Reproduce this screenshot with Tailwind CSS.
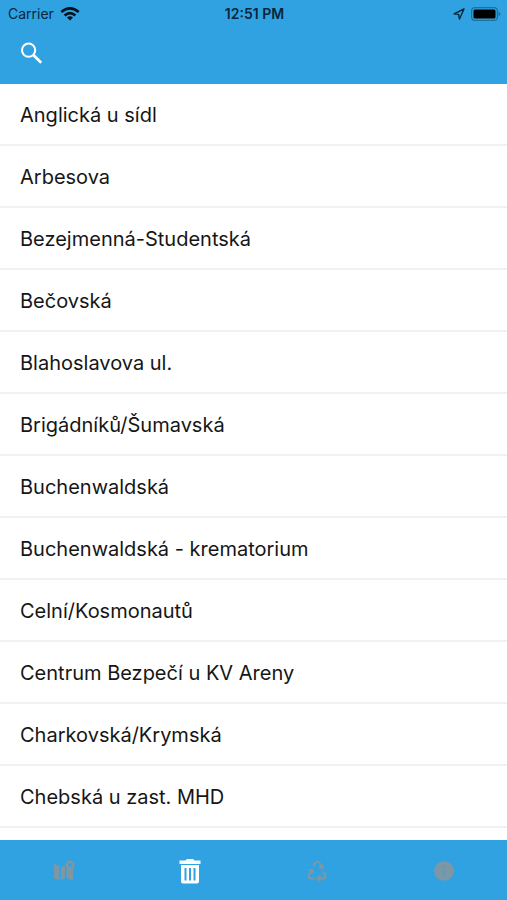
<!DOCTYPE html>
<html lang="cs">
<head>
<meta charset="utf-8">
<meta name="viewport" content="width=device-width, initial-scale=1">
<title>Zastávky</title>
<script src="https://cdn.jsdelivr.net/npm/@tailwindcss/browser@4"></script>
</head>
<body class="flex h-screen flex-col overflow-hidden bg-white font-['Inter','Liberation_Sans',sans-serif] text-[#161616]">
<header class="h-21 shrink-0 bg-[#30a2e1]">
  <div class="grid h-7 grid-cols-3 items-center pr-1.5 pl-2 text-[#07273a]">
    <div class="flex items-center gap-1.5 text-sm">
      <span>Carrier</span>
      <svg class="h-3.5 w-5" viewBox="0 0 20 14" fill="none" stroke="#04121b" stroke-width="2.6" aria-label="Wi-Fi"><path d="M1.3 5.1Q10-2.4 18.7 5.1M4.6 8.4Q10 3.8 15.4 8.4"/><path d="M10 13.5 7 10.5Q10 8 13 10.5Z" fill="#04121b" stroke="none"/></svg>
    </div>
    <time class="text-center text-sm font-semibold">12:51 PM</time>
    <div class="flex items-center justify-end gap-1.5">
      <svg class="size-3" viewBox="0 0 12 12" fill="none" stroke="currentColor" stroke-width="1.4" stroke-linejoin="round" aria-label="Poloha"><path d="M11 1 1 5.8 5.6 6.4 6.5 11Z"/></svg>
      <svg class="h-3.5 w-7.5" viewBox="0 0 30 14" aria-label="Baterie"><rect x=".6" y=".6" width="25.8" height="12.8" rx="3.5" fill="none" stroke="#216f9b" stroke-width="1.2"/><rect x="2.5" y="2.5" width="22" height="9" rx="1.5" fill="#000"/><path d="M27.5 4.7q2 .8 2 2.3t-2 2.3z" fill="#216f9b"/></svg>
    </div>
  </div>
  <button type="button" aria-label="Hledat" class="ml-5 mt-[13px] block">
    <svg class="size-6 text-white" viewBox="0 0 24 24" fill="none" stroke="currentColor"><circle cx="8.6" cy="9.2" r="6.600" stroke-width="2"/><path d="m13.400 14 7.800 7.800" stroke-width="2.7"/></svg>
  </button>
</header>
<main class="min-h-0 flex-1 overflow-hidden">
  <ul class="text-xl *:flex *:h-[62px] *:items-center *:border-b-2 *:border-[#f1f1f1] *:px-5 *:pt-0.5">
    <li>Anglická u sídl</li>
    <li>Arbesova</li>
    <li>Bezejmenná-Studentská</li>
    <li>Bečovská</li>
    <li>Blahoslavova ul.</li>
    <li>Brigádníků/Šumavská</li>
    <li>Buchenwaldská</li>
    <li>Buchenwaldská - krematorium</li>
    <li>Celní/Kosmonautů</li>
    <li>Centrum Bezpečí u KV Areny</li>
    <li>Charkovská/Krymská</li>
    <li>Chebská u zast. MHD</li>
  </ul>
</main>
<nav class="grid h-15 shrink-0 grid-cols-4 bg-[#30a2e1] pt-0.5 text-[#7e97a4]">
  <button type="button" aria-label="Mapa" class="flex items-center justify-center">
    <svg class="size-6" viewBox="0 0 24 24" fill="currentColor"><path d="M3 5 8.500 7v14L3 19.500ZM10 8l4-1.500v12.500l-4 2Z"/><path fill-rule="evenodd" d="M19 1.500a4.500 4.500 0 0 1 4.500 4.500c0 1.800-.9 3.200-1.500 4v11.500l-6.500-2.500V9.500c-.6-1-1-2.200-1-3.500A4.500 4.500 0 0 1 19 1.500Zm0 2.800a1.800 1.800 0 1 0 0 3.600 1.800 1.800 0 0 0 0-3.600Z"/></svg>
  </button>
  <button type="button" aria-label="Odpad" aria-current="page" class="flex items-center justify-center text-white">
    <svg class="h-6.5 w-6" viewBox="0 0 24 26" fill="currentColor"><path d="M1.500 2.500h6L9 1h6l1.500 1.500h6V6h-21Z"/><path fill-rule="evenodd" d="M3 7h18v16.500q0 2-2 2H5q-2 0-2-2ZM6.500 10v12.500h2V10Zm4.500 0v12.500h2V10Zm4.500 0v12.500h2V10Z"/></svg>
  </button>
  <button type="button" aria-label="Recyklace" class="flex items-center justify-center">
    <svg class="size-5" viewBox="0 0 20 20" fill="none" stroke="currentColor" stroke-width="2.200"><path d="M6.300 5 8 2.200q.8-1.200 2.500-1.200 1.400 0 2.200 1.400l2 3.500M12 6.300l3.200.8.900-3.200M16 10.500l2.200 3.700q1 2.800-2 3.300h-4.700M13.500 14.500l-3 3 3 2.500M7.500 17.500H4q-3-.6-2-3.300l3-5M1.800 9.400l3.400-.7.900 3.300"/></svg>
  </button>
  <button type="button" aria-label="Informace" class="flex items-center justify-center">
    <svg class="size-5" viewBox="0 0 20 20"><circle cx="10" cy="10" r="9.800" fill="currentColor"/><path d="M8.800 4.500h2.400V7H8.800ZM8.800 8.500h2.400v7H8.800Z" fill="#5b9cc0"/></svg>
  </button>
</nav>
</body>
</html>
